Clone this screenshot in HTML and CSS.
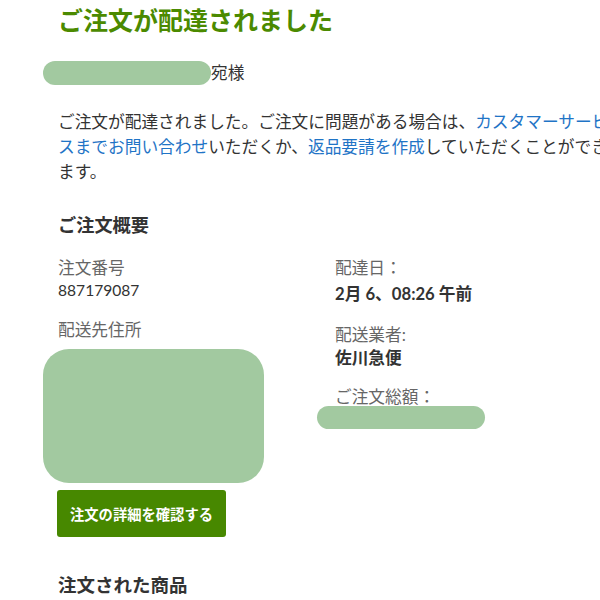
FILE: index.html
```html
<!DOCTYPE html>
<html lang="ja">
<head>
    <meta charset="UTF-8">
    <meta name="viewport" content="width=device-width, initial-scale=1.0">
    <title>ご注文が配達されました</title>
    <link rel="stylesheet" href="styles.css">
</head>
<body>
    <div class="mail">
        <h1 class="title">ご注文が配達されました</h1>
        <p class="greeting"><span class="redact redact-name"></span>宛様</p>
        <p class="intro">
            ご注文が配達されました。ご注文に問題がある場合は、<a href="#">カスタマーサービスまでお問い合わせ</a>いただくか、<a href="#">返品要請を作成</a>していただくことができます。
        </p>

        <h2 class="section">ご注文概要</h2>
        <div class="summary">
            <div class="col">
                <div class="label">注文番号</div>
                <div class="value number">887179087</div>
                <div class="label label-gap">配送先住所</div>
                <div class="redact redact-address"></div>
            </div>
            <div class="col col-right">
                <div class="label">配達日：</div>
                <div class="value strong first">2月 6、08:26 午前</div>
                <div class="label label-gap">配送業者:</div>
                <div class="value strong">佐川急便</div>
                <div class="label label-gap2">ご注文総額：</div>
                <div class="redact redact-total"></div>
            </div>
        </div>

        <a href="#" class="button">注文の詳細を確認する</a>

        <h2 class="section items">注文された商品</h2>
    </div>
</body>
</html>
```

FILE: styles.css
```css
html, body {
    margin: 0;
    padding: 0;
    overflow: hidden;
}
body {
    font-family: Lato, "Noto Sans CJK JP", sans-serif;
    background-color: #fff;
    color: #333;
}
.mail {
    width: 554px;
    padding-left: 58px;
}
.title {
    margin: 5px 0 0;
    font-size: 25px;
    line-height: 30px;
    font-weight: 700;
    color: #4b8a00;
}
.greeting {
    margin: 26px 0 0 -15px;
    display: flex;
    align-items: center;
    font-size: 16.7px;
    line-height: 24px;
}
.redact {
    background-color: #a2c9a0;
}
.redact-name {
    display: inline-block;
    width: 168px;
    height: 24px;
    border-radius: 12px;
}
.intro {
    margin: 25px 0 0;
    font-size: 16.7px;
    line-height: 25px;
}
.intro a {
    color: #1f74c6;
    text-decoration: none;
}
.section {
    margin: 28px 0 0;
    font-size: 18.2px;
    line-height: 24px;
    font-weight: 700;
    color: #333;
}
.summary {
    display: grid;
    grid-template-columns: 277px 1fr;
    margin-top: 20px;
}
.col {
    display: flex;
    flex-direction: column;
    align-items: flex-start;
}
.label {
    font-size: 16.7px;
    line-height: 22px;
    color: #666;
}
.value {
    font-size: 16.7px;
    line-height: 22px;
    color: #333;
}
.number {
    font-size: 15.6px;
}
.strong {
    font-weight: 700;
    line-height: 24px;
}
.first {
    margin-top: 3px;
}
.label-gap {
    margin-top: 18px;
}
.label-gap2 {
    margin-top: 16px;
}
.redact-address {
    width: 221px;
    height: 134px;
    border-radius: 26px;
    margin: 8px 0 0 -15px;
}
.redact-total {
    width: 168px;
    height: 23px;
    border-radius: 12px;
    margin: -2px 0 0 -18px;
}
.button {
    display: inline-flex;
    align-items: center;
    justify-content: center;
    width: 169px;
    height: 47px;
    margin: 7px 0 0 -1px;
    background-color: #478800;
    color: #fff;
    font-size: 14.3px;
    font-weight: 700;
    text-decoration: none;
    border-radius: 3px;
}
.items {
    margin-top: 36px;
    font-size: 18.5px;
}
```
